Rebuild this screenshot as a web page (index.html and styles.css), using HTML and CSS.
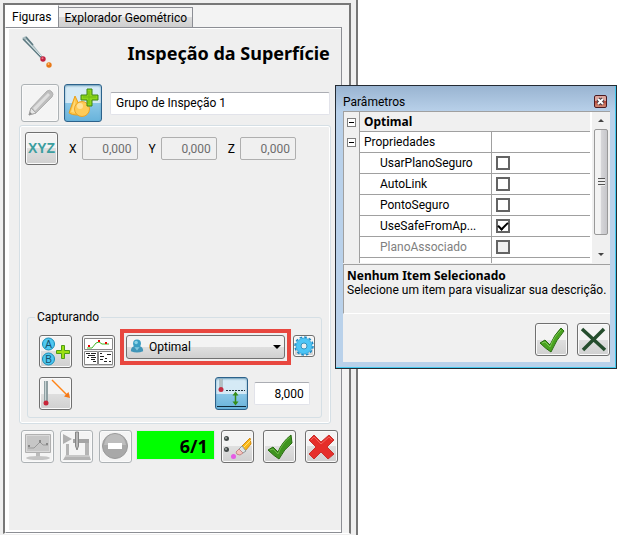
FILE: index.html
```html
<!DOCTYPE html>
<html lang="pt-BR">
<head>
    <meta charset="UTF-8">
    <meta name="viewport" content="width=device-width, initial-scale=1.0">
    <title>Inspeção da Superfície</title>
    <link rel="stylesheet" href="styles.css">
</head>
<body>
    <main class="dock">
        <div class="frame">
            <div class="tabs">
                <button class="tab active" type="button">Figuras</button>
                <button class="tab" type="button">Explorador Geométrico</button>
            </div>

            <div class="page">
                <div class="header">
                    <svg class="probe" viewBox="0 0 34 34">
                        <path d="M1 2 L5 0 L22 21 L20 23 Z" fill="#a9bcc0"/>
                        <path d="M2 3 L20 21 M5 1 L12 9" stroke="#5d7980" stroke-width="1.5" fill="none"/>
                        <path d="M5 4 L20 20" stroke="#e4eef0" stroke-width="1"/>
                        <circle cx="22" cy="23" r="2.7" fill="#c2213f"/>
                        <circle cx="21.5" cy="22.3" r="1" fill="#ec7c8c"/>
                        <circle cx="28" cy="29" r="2.7" fill="#e87817"/>
                        <circle cx="27.5" cy="28" r="1" fill="#ffc070"/>
                    </svg>
                    <h1>Inspeção da Superfície</h1>
                </div>

                <div class="name-row">
                    <button class="btn big off" type="button" aria-label="Editar">
                        <svg viewBox="0 0 36 36">
                            <path d="M7 30 L9 23 L25 6 Q28 4 30 7 Q32 9 30 12 L14 28 Z" fill="#bdbdbd" stroke="#b0b0b0"/>
                            <path d="M11 23 L26 8 L28 10 L13 26 Z" fill="#dedede"/>
                            <path d="M9 23 L14 28 L7 30 Z" fill="#e6e6e6" stroke="#aaa"/>
                            <path d="M7 30 L8 27 L10 29 Z" fill="#888"/>
                        </svg>
                    </button>
                    <button class="btn big on" type="button" aria-label="Nova figura">
                        <svg viewBox="0 0 36 36">
                            <path d="M10 11 L18 28 Q11 32 4 28 Z" fill="#ffc547" stroke="#e8a01c"/>
                            <path d="M10 14 L11 28 L6 27 Z" fill="#ffda7a"/>
                            <circle cx="17" cy="24" r="7.5" fill="#ffcb58" stroke="#eba325"/>
                            <circle cx="15" cy="21" r="3" fill="#ffe29a"/>
                            <path d="M22 4 h5 v6 h6 v5 h-6 v6 h-5 v-6 h-6 v-5 h6 Z" fill="#8ed61a" stroke="#3c8614"/>
                            <path d="M24 6 v13 M18 12 h13" stroke="#6fbb10"/>
                        </svg>
                    </button>
                    <input class="field name" type="text" value="Grupo de Inspeção 1" aria-label="Nome do grupo">
                </div>

                <div class="group">
                    <div class="coords">
                        <button class="btn" type="button"><span class="xyz">XYZ</span></button>
                        <label class="coord">X <input class="field num" type="text" value="0,000" disabled></label>
                        <label class="coord">Y <input class="field num" type="text" value="0,000" disabled></label>
                        <label class="coord">Z <input class="field num" type="text" value="0,000" disabled></label>
                    </div>

                    <fieldset class="capture">
                        <legend>Capturando</legend>
                        <div class="capture-row">
                            <button class="btn" type="button" aria-label="Adicionar pontos A e B">
                                <svg viewBox="0 0 31 31">
                                    <g fill="#4fc8f0" stroke="#168bb5">
                                        <circle cx="8.5" cy="8" r="6"/>
                                        <circle cx="8.5" cy="23" r="6"/>
                                    </g>
                                    <g class="badge">
                                        <text x="8.5" y="11.5">A</text>
                                        <text x="8.5" y="26.5">B</text>
                                    </g>
                                    <path d="M21.5 9.500 h3 v5 h5 v3 h-5 v5 h-3 v-5 h-5 v-3 h5 Z" fill="#9be012" stroke="#4e9d16"/>
                                </svg>
                            </button>
                            <button class="btn" type="button" aria-label="Relatório">
                                <svg viewBox="0 0 31 31">
                                    <path d="M1.500 2.500 h28 v11 h-28 Z M1.500 15.500 h13 v13 h-13 Z M15.500 15.500 h14 v13 h-14 Z" fill="#fff" stroke="#888"/>
                                    <path d="M4 12 h5 l4 -5 l3 -1 l3 2 h7" fill="none" stroke="#45b82d"/>
                                    <path d="M5 9 h2 v2 h-2 Z M15 4 h2 v2 h-2 Z M22 6 h2 v2 h-2 Z" fill="#e00"/>
                                    <path d="M3 17.500 h4 M8 17.500 h5 M5 19.500 h7 M4 21.500 h2 M8 21.500 h5 M8 23.500 h4 M10 25.500 h3 M17 17.500 h2 M24 18.500 h4 M17 20.500 h4 M22 22.500 h2 M17 23.500 h3 M21 25.500 h3 M26 25.500 h2" stroke="#222" stroke-width="1"/>
                                </svg>
                            </button>
                            <div class="highlight">
                                <svg class="user" viewBox="0 0 16 16">
                                    <path d="M1 14 Q1 9 5 8 L11 8 Q15 9 15 14 Q8 17 1 14 Z" fill="#4095b8"/>
                                    <path d="M5 9 L8 13 L11 9 Z" fill="#84c9df"/>
                                    <circle cx="8" cy="5" r="4.5" fill="#3a9ec3"/>
                                    <circle cx="7" cy="4" r="2" fill="#8ad2e6"/>
                                </svg>
                                <select class="combo" aria-label="Estratégia">
                                    <option>Optimal</option>
                                </select>
                            </div>
                            <button class="btn small" type="button" aria-label="Configurar">
                                <svg viewBox="0 0 20 20">
                                    <circle cx="10" cy="10" r="9" fill="none" stroke="#1889c4" stroke-width="1.5" stroke-dasharray="2.7 2"/>
                                    <circle cx="10" cy="10" r="7.8" fill="#4cc5f6" stroke="#3aaee2"/>
                                    <circle cx="10" cy="10" r="3" fill="#e8eef0" stroke="#3593bd"/>
                                </svg>
                            </button>
                        </div>
                        <div class="capture-row second">
                            <button class="btn" type="button" aria-label="Direção">
                                <svg viewBox="0 0 31 31">
                                    <path d="M4 3 h4 v21 h-4 Z" fill="#8fa0a3"/>
                                    <path d="M5.500 3 v21" stroke="#c8d4d5"/>
                                    <circle cx="6" cy="25" r="2.5" fill="#c8263a"/>
                                    <path d="M12 2 L28 18" stroke="#ff8416" stroke-width="1.5"/>
                                    <path d="M30 20 L24 18.500 L28.500 14 Z" fill="#f47715"/>
                                </svg>
                            </button>
                            <button class="btn on" type="button" aria-label="Distância">
                                <svg viewBox="0 0 31 31">
                                    <path d="M5 1 v9" stroke="#8b9a9e" stroke-width="3"/>
                                    <path d="M5 1 v9" stroke="#dbe5e7"/>
                                    <circle cx="5" cy="11.5" r="2.5" fill="#c42e43"/>
                                    <path d="M10 12.500 h19" stroke="#1d323d" stroke-dasharray="2 1"/>
                                    <path d="M1 28.500 h29" stroke="#102b3c"/>
                                    <path d="M19.500 16 v10" stroke="#318c13" stroke-width="1.5"/>
                                    <path d="M19.500 13.500 l3 4 h-6 Z M19.500 27.500 l3 -4 h-6 Z" fill="#358d18"/>
                                </svg>
                            </button>
                            <input class="field num" type="text" value="8,000" aria-label="Distância">
                        </div>
                    </fieldset>
                </div>

                <div class="actions">
                    <button class="btn off" type="button" aria-label="Gráfico">
                        <svg viewBox="0 0 31 31">
                            <path d="M3.500 3.500 h25 v18 h-25 Z" fill="#d9d9d9" stroke="#b0b0b0"/>
                            <path d="M5 5 h22 v15 h-22 Z" fill="#c6c6c6"/>
                            <path d="M6 17 h6 l6 -6 l3 3 h5" fill="none" stroke="#999"/>
                            <path d="M6 14 h2 v2 h-2 Z M17 9 h2 v3 h-2 Z M24 12 h2 v2 h-2 Z" fill="#888"/>
                            <path d="M14 22 h4 v4 h-4 Z" fill="#bbb"/>
                            <ellipse cx="16" cy="27" rx="12" ry="2" fill="#c4c4c4"/>
                        </svg>
                    </button>
                    <button class="btn off" type="button" aria-label="Máquina">
                        <svg viewBox="0 0 31 31">
                            <path d="M6 12 h21 v15 h-21 Z" fill="#f4f4f4"/>
                            <path d="M5 13 h3 v11 h16 v-15 h4 v15 l2 5 h-28 l3 -5 Z" fill="#b4b4b4"/>
                            <path d="M12 8 h16 v4 h-16 Z" fill="#a4a4a4"/>
                            <path d="M2 3 L11 8 L2 13 Z" fill="#b0b0b0"/>
                            <path d="M14.500 1 h3 v14 l-1.500 4 l-1.500 -4 Z" fill="#b8b8b8" stroke="#858585"/>
                            <path d="M4 25 h24" stroke="#ddd"/>
                        </svg>
                    </button>
                    <button class="btn off" type="button" aria-label="Parar">
                        <svg viewBox="0 0 31 31">
                            <circle cx="15" cy="15" r="12.5" fill="#a8a8a8" stroke="#999"/>
                            <path d="M4 14 Q6 3 15 3 Q24 3 26 14 Z" fill="#bdbdbd"/>
                            <path d="M8 12 h14 v6 h-14 Z" fill="#fff"/>
                        </svg>
                    </button>
                    <output class="counter">6/1</output>
                    <button class="btn" type="button" aria-label="Apagar ponto">
                        <svg viewBox="0 0 31 31">
                            <circle cx="4.5" cy="7.5" r="2.5" fill="#454b4a"/>
                            <circle cx="4" cy="7" r="1" fill="#a0a7a6"/>
                            <circle cx="4.5" cy="18.5" r="2.5" fill="#454b4a"/>
                            <circle cx="4" cy="18" r="1" fill="#a0a7a6"/>
                            <circle cx="11.5" cy="25.5" r="2.5" fill="#e65be4"/>
                            <path d="M19 16 L28 7 L29 13 L23 20 Z" fill="#f9b817" stroke="#d3890d"/>
                            <path d="M21 17 L29 9" stroke="#ffe27a"/>
                            <path d="M17 18 L20 15 L24 20 L21 22 Z" fill="#dce4e5" stroke="#8d999b"/>
                            <path d="M14 21 L17 18 L21 22 L18 24 Q14 24 14 21 Z" fill="#f5c3bd" stroke="#c28b88"/>
                        </svg>
                    </button>
                    <button class="btn" type="button" aria-label="Confirmar">
                        <svg viewBox="0 0 31 31">
                            <path d="M4 19 L9 16 L14 21 Q18 11 27 4 L28 12 Q20 18 15 28 Q10 25 4 19 Z" fill="#3f9420" stroke="#286b10"/>
                            <path d="M6 19 L9 18 L14 23 Q18 12 26 6" fill="none" stroke="#6cb548"/>
                        </svg>
                    </button>
                    <button class="btn" type="button" aria-label="Cancelar">
                        <svg viewBox="0 0 31 31">
                            <path d="M3 9 L8 4 L15 11 L23 4 L28 9 L21 16 L28 23 L22 28 L15 21 L8 28 L3 23 L10 16 Z" fill="#e62e2a" stroke="#c8302c"/>
                            <path d="M5 9 L8 6 L15 13 L23 6 L26 9" fill="none" stroke="#f4645e"/>
                        </svg>
                    </button>
                </div>
            </div>
        </div>
    </main>

    <section class="dialog" role="dialog" aria-labelledby="dialog-title">
        <div class="titlebar">
            <h2 id="dialog-title">Parâmetros</h2>
            <button class="close" type="button" aria-label="Fechar">
                <svg viewBox="0 0 11 11">
                    <path d="M3 3 L8 8 M8 3 L3 8" stroke="#4b3b42" stroke-width="4"/>
                    <path d="M3 3 L8 8 M8 3 L3 8" stroke="#fff" stroke-width="2"/>
                </svg>
            </button>
        </div>

        <div class="client">
            <div class="grid">
                <div class="grid-view">
                    <table class="props">
                        <colgroup>
                            <col class="col-gutter">
                            <col>
                            <col class="col-value">
                        </colgroup>
                        <tr class="category">
                            <td class="gutter"><button class="toggle" type="button" aria-label="Recolher Optimal"></button></td>
                            <th colspan="2">Optimal</th>
                        </tr>
                        <tr class="parent">
                            <td class="gutter"><button class="toggle" type="button" aria-label="Recolher Propriedades"></button></td>
                            <td class="key">Propriedades</td>
                            <td></td>
                        </tr>
                        <tr>
                            <td class="gutter"></td>
                            <td class="key"><label for="safe-plane">UsarPlanoSeguro</label></td>
                            <td><input class="check" id="safe-plane" type="checkbox"></td>
                        </tr>
                        <tr>
                            <td class="gutter"></td>
                            <td class="key"><label for="auto-link">AutoLink</label></td>
                            <td><input class="check" id="auto-link" type="checkbox"></td>
                        </tr>
                        <tr>
                            <td class="gutter"></td>
                            <td class="key"><label for="safe-point">PontoSeguro</label></td>
                            <td><input class="check" id="safe-point" type="checkbox"></td>
                        </tr>
                        <tr>
                            <td class="gutter"></td>
                            <td class="key"><label for="safe-from">UseSafeFromAp...</label></td>
                            <td><input class="check" id="safe-from" type="checkbox" checked></td>
                        </tr>
                        <tr class="disabled">
                            <td class="gutter"></td>
                            <td class="key"><label for="plane">PlanoAssociado</label></td>
                            <td><input class="check" id="plane" type="checkbox" disabled></td>
                        </tr>
                        <tr>
                            <td class="gutter"></td>
                            <td class="key"></td>
                            <td></td>
                        </tr>
                    </table>
                </div>
                <div class="scrollbar">
                    <span class="arrow up"></span>
                    <span class="thumb"></span>
                    <span class="arrow down"></span>
                </div>
            </div>

            <div class="description">
                <strong>Nenhum Item Selecionado</strong>
                <p>Selecione um item para visualizar sua descrição.</p>
            </div>

            <div class="dialog-actions">
                <button class="btn" type="button" aria-label="Aceitar">
                    <svg viewBox="0 0 31 31">
                        <path d="M4 19 L9 16 L14 21 Q18 11 25 4 L28 7 Q20 16 15 28 Q10 25 4 19 Z" fill="#49a31f" stroke="#286b10"/>
                        <path d="M6 19 L9 18 L14 23 Q18 12 25 6" fill="none" stroke="#7bc552"/>
                    </svg>
                </button>
                <button class="btn" type="button" aria-label="Descartar">
                    <svg viewBox="0 0 31 31">
                        <path d="M4 5 L27 26 M26 5 L5 26" stroke="#254d2d" stroke-width="3.5"/>
                    </svg>
                </button>
            </div>
        </div>
    </section>
</body>
</html>
```
FILE: styles.css
```css
* {
    margin: 0;
    padding: 0;
    box-sizing: border-box;
}

body {
    min-height: 100vh;
    display: flex;
    background: #fff;
    color: #000;
    font-family: Tahoma, Roboto, sans-serif;
    font-size: 12px;
    line-height: 16px;
}

button,
input,
select {
    font: inherit;
    color: inherit;
}

h1,
th,
strong,
.counter {
    font-family: Tahoma, "Noto Sans", sans-serif;
}

svg {
    display: block;
}

/* Docked panel */
.dock {
    width: 58%;
    display: flex;
    padding: 3px 5px 1px 3px;
    background: #efefef;
    border-right: 2px solid #777;
}

.frame {
    flex: 1;
    display: flex;
    flex-direction: column;
    border: 2px solid #777;
    border-bottom: 1px solid #fff;
    padding-right: 7px;
    background: #f3f3f3;
}

.tabs {
    display: flex;
    align-items: flex-end;
    height: 22px;
}

.tab {
    height: 20px;
    padding: 0 5px;
    border: 1px solid #8c8e94;
    border-width: 1px 1px 0 0;
    background: linear-gradient(#f2f2f2 50%, #dcdcdc 50%, #cfcfcf);
    white-space: nowrap;
}

.tab.active {
    height: 22px;
    padding: 0 7px;
    background: #fff;
    border-top-color: #fff;
}

.page {
    flex: 1;
    border: 1px solid #8c8e94;
    border-left-color: #fff;
    box-shadow: inset 3px 0 #fff, inset 0 -2px #fff, inset 0 1px #fff;
    background: #efefef;
    padding: 8px 8px 8px 15px;
}

.header {
    display: flex;
    justify-content: space-between;
    padding-right: 3px;
}

.header h1 {
    font-size: 18px;
    line-height: 34px;
}

.probe {
    width: 34px;
    height: 34px;
}

.name-row {
    display: flex;
    align-items: center;
    gap: 5px;
    margin-top: 14px;
    padding-right: 3px;
}

/* Buttons */
.btn {
    flex: none;
    width: 33px;
    height: 33px;
    border: 1px solid #707070;
    border-radius: 3px;
    background: linear-gradient(#f3f3f3 50%, #dfdfdf 50%, #d0d0d0);
    box-shadow: inset 0 0 0 1px #fafafa;
}

.btn svg {
    width: 100%;
    height: 100%;
}

.btn.big {
    width: 38px;
    height: 38px;
}

.btn.small {
    width: 22px;
    height: 22px;
}

.btn.off {
    border-color: #adb2b5;
    background: #f4f4f4;
}

.btn.on {
    border-color: #2c628b;
    background: linear-gradient(#d5eaf6 50%, #8cc8e8 50%, #68b3db);
    box-shadow: inset 0 1px 2px #6a9bb8;
}

.xyz {
    color: #3c9e9f;
    font-family: "Liberation Sans", Arial, sans-serif;
    font-size: 14px;
    font-weight: bold;
}

.badge {
    fill: #17516c;
    font-family: "Liberation Sans", Arial, sans-serif;
    font-size: 10px;
    text-anchor: middle;
}

/* Fields */
.field {
    min-width: 0;
    height: 23px;
    padding: 0 5px;
    border: 1px solid #e2e3ea;
    border-top-color: #abadb3;
    border-radius: 2px;
    background: #fff;
}

.field.name {
    flex: 1;
    margin-left: 3px;
}

.field.num {
    width: 56px;
    text-align: right;
}

.field:disabled {
    border-color: #afafaf;
    background: #f0f0f0;
    color: #6d6d6d;
}

.group {
    margin: 3px 2px 0 -2px;
    padding: 6px 8px 5px 7px;
    border: 1px solid #d5dfe5;
    border-radius: 3px;
    box-shadow: inset 0 0 0 1px #fff;
}

.coords {
    display: flex;
    align-items: center;
    margin-left: -2px;
}

.coord {
    display: flex;
    align-items: center;
    gap: 5px;
    margin-left: 11px;
}

/* Capture settings */
.capture {
    margin-top: 144px;
    padding: 10px 6px 7px 11px;
    border: 1px solid #d5dfe5;
    border-radius: 3px;
}

.capture legend {
    margin-left: -4px;
    padding: 0 2px;
}

.capture-row {
    display: flex;
    align-items: flex-start;
    gap: 10px;
}

.capture-row.second {
    align-items: center;
    justify-content: flex-end;
    gap: 6px;
    margin-top: 9px;
    padding-right: 5px;
}

.capture-row.second .btn:first-child {
    margin-right: auto;
}

.highlight {
    flex: 1;
    position: relative;
    margin: -6px -8px 0 -5px;
    padding: 2px;
    border: 4px solid #e8473f;
}

.user {
    position: absolute;
    left: 6px;
    top: 5px;
    width: 14px;
    height: 16px;
}

.combo {
    display: block;
    width: 100%;
    height: 24px;
    padding: 0 22px;
    appearance: none;
    border: 1px solid #707070;
    border-radius: 3px;
    background: linear-gradient(#f3f3f3 50%, #dfdfdf 50%, #d0d0d0);
}

.highlight::after {
    content: "";
    position: absolute;
    right: 6px;
    top: 12px;
    border: 4px solid transparent;
    border-top-color: #000;
    border-bottom: 0;
}

.actions {
    display: flex;
    gap: 6px;
    margin: 6px -5px 0 0;
}

.counter {
    flex: 1;
    height: 30px;
    margin-left: -2px;
    padding-right: 6px;
    border: 1px solid #e2e3ea;
    background: #0f0;
    font-size: 18px;
    font-weight: bold;
    line-height: 30px;
    text-align: right;
}

.counter ~ .btn + .btn {
    margin-left: 3px;
}

/* Parameters window */
.dialog {
    position: absolute;
    left: 335px;
    top: 85px;
    width: 282px;
    padding: 0 6px 6px 7px;
    border: 1px solid #242b33;
    background: linear-gradient(#99b4d1, #b9d1ea 26px);
    box-shadow: inset -1px -1px #43c9ee;
}

.titlebar {
    display: flex;
    align-items: center;
    justify-content: space-between;
    height: 25px;
    padding-top: 6px;
    padding-right: 3px;
}

.titlebar h2 {
    font-size: 12px;
    font-weight: normal;
}

.close {
    width: 13px;
    height: 13px;
    border: 1px solid #4d1a20;
    border-radius: 2px;
    background: linear-gradient(#dda69d 50%, #b94b3b 50%, #d08b76);
}

.client {
    background: #f0f0f0;
}

.grid {
    display: flex;
    gap: 2px;
    height: 152px;
    border-top: 1px solid #a0a0a0;
    border-left: 1px solid #a0a0a0;
    background: #fff;
}

.grid-view {
    flex: 1;
    overflow: hidden;
}

.props {
    width: 100%;
    table-layout: fixed;
    border-collapse: separate;
    border-spacing: 0;
}

.col-gutter {
    width: 16px;
}

.col-value {
    width: 98px;
}

.props td,
.props th {
    height: 21px;
    border-bottom: 1px solid #a0a0a0;
    text-align: left;
    line-height: 16px;
    white-space: nowrap;
}

.props .category td,
.props .category th {
    height: 20px;
    padding-left: 4px;
    background: #f0f0f0;
}

.props .key {
    padding-left: 20px;
    border-right: 1px solid #a0a0a0;
}

.props .parent .key {
    padding-left: 4px;
}

.props td:last-child {
    padding-left: 4px;
}

.props .gutter,
.props .category .gutter {
    padding: 0 0 0 3px;
    border-right: 1px solid #a0a0a0;
    border-bottom: 0;
    background: #f0f0f0;
}

.props .disabled .key {
    color: #808080;
}

.toggle {
    display: flex;
    align-items: center;
    justify-content: center;
    width: 9px;
    height: 9px;
    border: 1px solid #808080;
    background: #fff;
}

.toggle::before {
    content: "";
    width: 5px;
    height: 1px;
    background: #000;
}

.check {
    display: grid;
    place-items: center;
    width: 14px;
    height: 14px;
    appearance: none;
    border: 2px solid #646464;
    background: #fff;
}

.check:checked::before {
    content: "";
    width: 8px;
    height: 4px;
    margin-bottom: 3px;
    border: solid #000;
    border-width: 0 0 2px 2px;
    transform: rotate(-45deg);
}

.check:disabled {
    background: #f0f0f0;
}

.scrollbar {
    display: flex;
    flex-direction: column;
    align-items: center;
    width: 18px;
    background: #f0f0f0;
}

.arrow {
    margin: 7px 0;
    border: 3px solid transparent;
}

.arrow.up {
    border-top: 0;
    border-bottom-color: #444;
}

.arrow.down {
    border-bottom: 0;
    border-top-color: #444;
}

.thumb {
    height: 106px;
    display: flex;
    align-items: center;
    justify-content: center;
    width: 14px;
    border: 1px solid #999;
    border-radius: 2px;
    background: linear-gradient(90deg, #f3f3f3 45%, #d6d6d9 50%, #c6c6ca);
}

.thumb::before {
    content: "";
    width: 7px;
    height: 8px;
    background: repeating-linear-gradient(#555 0 1px, #eee 1px 3px);
}

.arrow.down {
    margin-top: auto;
}

.description {
    height: 50px;
    margin-top: 1px;
    padding: 4px 0 0 3px;
    border: 1px solid #a0a0a0;
    border-width: 1px 0 1px 1px;
    border-bottom-color: #fff;
    line-height: 14px;
    white-space: nowrap;
}

.description strong {
    display: block;
}

.dialog-actions {
    display: flex;
    justify-content: flex-end;
    gap: 9px;
    padding: 9px 0 6px;
}
```
